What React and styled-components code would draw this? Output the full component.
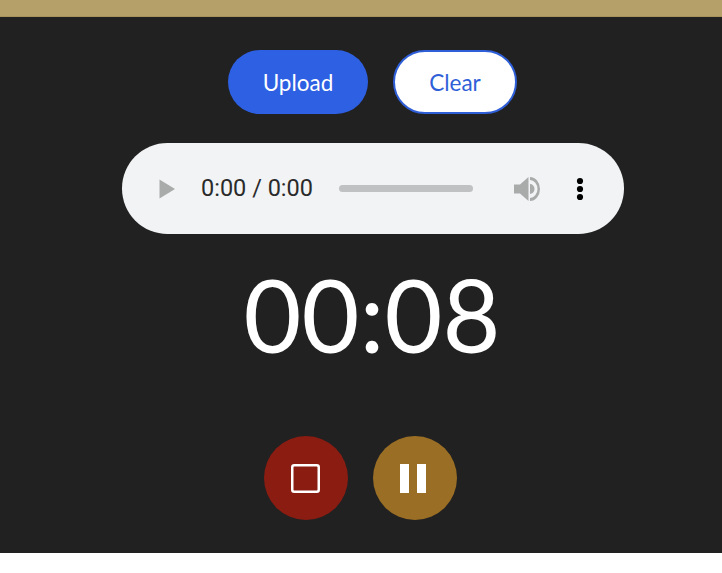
import React from 'react';
import styled, { createGlobalStyle } from 'styled-components';

const GlobalStyle = createGlobalStyle`
  html, body {
    margin: 0;
    padding: 0;
    background-color: #ffffff;
  }
  body {
    font-family: "Lato", "Liberation Sans", sans-serif;
  }
`;

const TopBar = styled.div`
  height: 16px;
  background-color: #b5a06a;
  border-bottom: 1px solid #a8935f;
`;

const Recorder = styled.main`
  height: 536px;
  box-sizing: border-box;
  background-color: #212121;
  display: flex;
  flex-direction: column;
  align-items: center;
  padding-top: 33px;
`;

const ButtonRow = styled.div`
  display: flex;
  gap: 25px;
  margin-left: 23px;
`;

const PillButton = styled.button`
  height: 64px;
  width: ${(p) => (p.$outline ? '124px' : '140px')};
  box-sizing: border-box;
  border-radius: 32px;
  border: ${(p) => (p.$outline ? '2px solid #2f5fd8' : 'none')};
  background-color: ${(p) => (p.$outline ? '#ffffff' : '#2d60e3')};
  color: ${(p) => (p.$outline ? '#2f5fd8' : '#ffffff')};
  font-family: "Lato", sans-serif;
  font-size: 22.5px;
  padding: 0;
`;

const Player = styled.div`
  width: 502px;
  height: 91px;
  margin-top: 29px;
  margin-left: 24px;
  box-sizing: border-box;
  border-radius: 46px;
  background-color: #f1f3f4;
  display: flex;
  align-items: center;
  padding-left: 37px;
`;

const TimeText = styled.span`
  font-family: "Roboto", sans-serif;
  font-size: 23.5px;
  color: #2a2a2a;
  margin-left: 26px;
  margin-bottom: 2px;
  white-space: nowrap;
`;

const Track = styled.div`
  width: 134px;
  height: 7px;
  border-radius: 4px;
  background-color: #bfc1c2;
  margin-left: 26px;
`;

const VolumeIcon = styled.svg`
  width: 28px;
  height: 28px;
  margin-left: 40px;
  flex: none;
`;

const MenuIcon = styled.svg`
  width: 8px;
  height: 24px;
  margin-left: 35px;
  flex: none;
`;

const PlayIcon = styled.svg`
  width: 16px;
  height: 20px;
  flex: none;
`;

const Timer = styled.div`
  margin-top: 26px;
  margin-left: 22px;
  font-size: 100px;
  line-height: 108px;
  color: #ffffff;
  font-weight: 400;
`;

const Controls = styled.div`
  display: flex;
  gap: 25px;
  margin-top: 68px;
  margin-right: 2px;
`;

const RoundButton = styled.button`
  width: 84px;
  height: 84px;
  border-radius: 50%;
  border: none;
  padding: 0;
  background-color: ${(p) => p.$color};
  display: flex;
  align-items: center;
  justify-content: center;
`;

const StopIcon = styled.svg`
  width: 29px;
  height: 29px;
`;

const PauseIcon = styled.div`
  display: flex;
  gap: 8px;
  margin-right: 3px;
`;

const PauseBar = styled.div`
  width: 9px;
  height: 29px;
  background-color: #ffffff;
`;

const App = () => {
  return (
    <>
      <GlobalStyle />
      <TopBar />
      <Recorder>
        <ButtonRow>
          <PillButton>Upload</PillButton>
          <PillButton $outline>Clear</PillButton>
        </ButtonRow>

        <Player>
          <PlayIcon viewBox="0 0 16 20">
            <path d="M0.5 0.5 L16 10 L0.5 19.5 Z" fill="#a9abab" />
          </PlayIcon>
          <TimeText>0:00 / 0:00</TimeText>
          <Track />
          <VolumeIcon viewBox="0 0 28 28">
            <path d="M1 9.5 H7 L15.5 2 V26 L7 18.5 H1 Z" fill="#a9abab" />
            <path d="M17 9 A4.5 5 0 0 1 17 19 Z" fill="#a9abab" />
            <path d="M17 2 A10 12 0 0 1 17 26 V23 A7.5 9 0 0 0 17 5 Z" fill="#a9abab" />
          </VolumeIcon>
          <MenuIcon viewBox="0 0 8 24">
            <circle cx="4" cy="4" r="3.1" fill="#000" />
            <circle cx="4" cy="12" r="3.1" fill="#000" />
            <circle cx="4" cy="20" r="3.1" fill="#000" />
          </MenuIcon>
        </Player>

        <Timer>00:08</Timer>

        <Controls>
          <RoundButton $color="#8a1c12">
            <StopIcon viewBox="0 0 29 29">
              <rect x="1.25" y="1.25" width="26.5" height="26.5" rx="2" fill="none" stroke="#fff" strokeWidth="2.5" />
            </StopIcon>
          </RoundButton>
          <RoundButton $color="#9a6e24">
            <PauseIcon>
              <PauseBar />
              <PauseBar />
            </PauseIcon>
          </RoundButton>
        </Controls>
      </Recorder>
    </>
  );
};

export default App;
